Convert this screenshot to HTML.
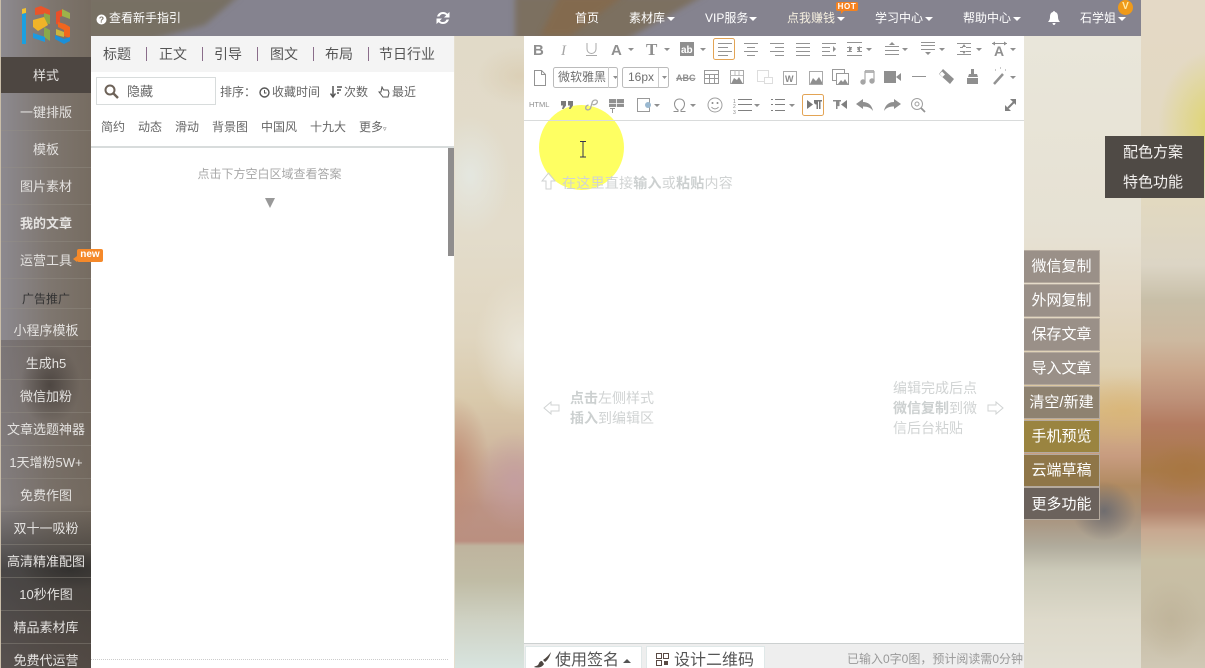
<!DOCTYPE html>
<html lang="zh"><head><meta charset="utf-8"><title>135编辑器</title>
<style>
*{box-sizing:border-box}
html,body{margin:0;padding:0;width:1205px;height:668px;overflow:hidden;background:#e5dfcf}
body{position:relative;font-family:"Liberation Sans","Noto Sans CJK SC",sans-serif;font-size:12px;color:#555}
.a{position:absolute;white-space:nowrap}
.c{text-align:center}
#bgm{left:455px;top:36px;width:69px;height:632px;background:
 radial-gradient(ellipse 40px 60px at 15px 140px,rgba(228,232,226,.9),transparent),
 radial-gradient(ellipse 45px 30px at 65px 40px,rgba(218,205,178,.8),transparent),
 radial-gradient(ellipse 45px 70px at 65px 310px,rgba(234,230,218,.95),transparent),
 radial-gradient(ellipse 40px 50px at 60px 445px,rgba(196,158,160,.95),transparent),
 radial-gradient(ellipse 35px 70px at 0 430px,rgba(190,135,110,.85),transparent),
 linear-gradient(180deg,#e1dac8 0,#e3dccb 200px,#e0d6c0 300px,#d9c9ab 365px,#d0b9a0 410px,#bc9384 470px,#ba8f80 505px,#bfb49e 510px,#c0bca5 545px,#cfd2c4 585px,#d8e4df 632px)}
#bgr{left:1024px;top:36px;width:117px;height:632px;background:
 radial-gradient(ellipse 32px 30px at 80px 475px,rgba(105,105,110,.9),transparent),
 radial-gradient(ellipse 55px 35px at 100px 375px,rgba(218,178,110,.55),transparent),
 linear-gradient(180deg,#e9e6da 0,#e6e1d3 200px,#e3d8c4 270px,#e0d2b4 330px,#d8bb88 375px,#c89c80 420px,#b08a60 450px,#a8927c 480px,#b0ab9c 510px,#cccab9 535px,#dedacb 585px,#e2dfd3 632px)}
#bgr3{left:1141px;top:0;width:64px;height:668px;background:
 radial-gradient(ellipse 55px 75px at 72px 125px,rgba(222,212,105,.95),transparent),
 radial-gradient(ellipse 40px 28px at 45px 470px,rgba(168,118,66,.9),transparent),
 radial-gradient(ellipse 32px 40px at 30px 620px,rgba(190,178,152,.75),transparent),
 linear-gradient(180deg,#e4d9c6 0,#e2d9c0 200px,#dcd5c5 265px,#c8bfa8 300px,#cdb9a0 340px,#c9a58a 370px,#bd9078 400px,#b37b60 425px,#a87a48 470px,#b08068 510px,#c8a890 530px,#c8bfa4 560px,#c6bca4 620px,#d0c8b5 668px)}
#side{left:0;top:0;width:91px;height:668px;background:
 radial-gradient(ellipse 30px 40px at 50px 385px,rgba(50,45,42,.75),transparent),
 radial-gradient(ellipse 50px 20px at 70px 570px,rgba(40,40,40,.8),transparent),
 linear-gradient(90deg,#8d8a90 0,#7e766f 55%,#766c61 100%)}
#side2{left:0;top:340px;width:91px;height:328px;background:linear-gradient(180deg,rgba(90,80,75,.35),rgba(110,100,90,.3) 50%,rgba(50,48,46,.75) 70%,rgba(70,62,58,.75) 100%)}
#edge{left:0;top:0;width:1px;height:668px;background:#c9bda9}
.s{left:1px;width:90px;text-align:center;color:#e4e2e0;font-size:13px;line-height:18px}
.l{left:1px;width:90px;height:1px;background:rgba(150,145,135,.4)}
#hd{left:91px;top:0;width:1050px;height:36px;background:#85838f;overflow:hidden}
.n{top:10px;color:#fff;font-size:12px;line-height:17px}
.car{position:absolute;width:0;height:0;border-left:4px solid transparent;border-right:4px solid transparent;border-top:4px solid #fff;top:17px}
#pan{left:91px;top:36px;width:363px;height:632px;background:#fff}
.t{top:45px;font-size:14px;color:#555;line-height:18px}
.sp{top:47px;width:1px;height:14px;background:#8a6d8a}
.f{top:119px;font-size:12px;color:#666;line-height:16px}
.r{top:84px;font-size:12px;color:#666;line-height:17px}
#ed{left:524px;top:36px;width:500px;height:632px;background:#fff}
.h{color:#d0d3d3;font-size:14px;line-height:20px}
.h b{font-weight:bold;color:#ccd0d0}
.b{left:1024px;width:76px;height:33px;color:#fff;font-size:15px;line-height:32px;text-align:center;border:1px solid #b5aa9e;border-left:0;background:#9a9088}
.m{left:1123px;color:#f2f0ee;font-size:15px;line-height:20px}
</style></head><body>
<div class="a" id="bgm"></div>
<div class="a" id="bgr"></div>
<div class="a" id="bgr3"></div>

<div class="a" id="side"></div>
<div class="a" id="side2"></div>
<div class="a" id="edge"></div>

<svg class="a" style="left:15px;top:4px" width="62" height="44" viewBox="15 4 62 44">
<path d="M22 9l4-1v5l-4 1z" fill="#f2c230"/><path d="M22 14l4-1v31l-4 0z" fill="#1aa0e0"/>
<path d="M35 8l6-2 9 4v6l-6-2-9 1z" fill="#e9552a"/><path d="M44 13l6 2v9l-6-1z" fill="#8fa845"/>
<path d="M33 20l11-3 4 8-10 6-5-4z" fill="#f0b428"/><path d="M44 27l6 3v11l-6-4z" fill="#8aa84a"/>
<path d="M33 33l12 4v5l-12-4z" fill="#1b9ae0"/>
<path d="M56 12l7-3v7l-3 1v8l-4-1z" fill="#e8502a"/><path d="M62 9l8 4v6l-8-3z" fill="#9db24a"/>
<path d="M58 22l7 2 5 3v11l-6-2v-6l-6-3z" fill="#f0661e"/><path d="M56 29l8 3v5l-8-2z" fill="#c9b540"/>
<path d="M55 35l9 4 6-2v4l-6 3-9-5z" fill="#1b8fd8"/>
</svg>

<div class="a" style="left:1px;top:57px;width:90px;height:36px;background:#4d4641"></div>
<div class="a s" style="top:67px">样式</div>
<div class="a l" style="top:130px"></div><div class="a l" style="top:167px"></div><div class="a l" style="top:204px"></div><div class="a l" style="top:241px"></div><div class="a l" style="top:278px"></div><div class="a l" style="top:308px"></div><div class="a l" style="top:346px"></div><div class="a l" style="top:379px"></div><div class="a l" style="top:412px"></div><div class="a l" style="top:445px"></div><div class="a l" style="top:478px"></div><div class="a l" style="top:511px"></div><div class="a l" style="top:544px"></div><div class="a l" style="top:577px"></div><div class="a l" style="top:610px"></div><div class="a l" style="top:643px"></div>
<div class="a s" style="top:104px">一键排版</div>
<div class="a s" style="top:141px">模板</div>
<div class="a s" style="top:178px">图片素材</div>
<div class="a s" style="top:215px;font-weight:bold">我的文章</div>
<div class="a s" style="top:252px">运营工具</div>
<div class="a s" style="top:290px;font-size:12px;color:#333">广告推广</div>
<div class="a s" style="top:322px">小程序模板</div>
<div class="a s" style="top:355px">生成h5</div>
<div class="a s" style="top:388px">微信加粉</div>
<div class="a s" style="top:421px">文章选题神器</div>
<div class="a s" style="top:454px">1天增粉5W+</div>
<div class="a s" style="top:487px">免费作图</div>
<div class="a s" style="top:520px">双十一吸粉</div>
<div class="a s" style="top:553px">高清精准配图</div>
<div class="a s" style="top:586px">10秒作图</div>
<div class="a s" style="top:619px">精品素材库</div>
<div class="a s" style="top:652px">免费代运营</div>

<div class="a" id="hd">
<svg class="a" style="left:0;top:0" width="1050" height="36" viewBox="91 0 1050 36">
<defs><filter id="bl"><feGaussianBlur stdDeviation="3"/></filter></defs>
<path d="M85 -5H240L205 25 150 40H85z" fill="#776f64" filter="url(#bl)"/>
<path d="M515 -5H705L625 40H515z" fill="#7c6f60" filter="url(#bl)"/>
<path d="M560 -5H625L570 36H540z" fill="#86694a" opacity=".75" filter="url(#bl)"/>
</svg>
</div>
<svg class="a" style="left:96px;top:14px" width="11" height="11" viewBox="0 0 11 11"><circle cx="5.500" cy="5.500" r="5" fill="#fff"/><text x="5.500" y="8.600" font-size="8.500" font-weight="bold" text-anchor="middle" fill="#7a7468" font-family="Liberation Sans">?</text></svg>
<div class="a n" style="left:109px">查看新手指引</div>
<svg class="a" style="left:435px;top:10px" width="16" height="16" viewBox="0 0 16 16"><path d="M2 6.500C3 3.500 5.300 2 8 2c2 0 3.300.8 4.400 1.900L14.500 2v5.500H9l2.200-2.200C10.500 4.500 9.400 4 8 4 6.300 4 5 5 4.500 6.500z" fill="#fff"/><path d="M14 9.500C13 12.500 10.700 14 8 14c-2 0-3.300-.8-4.400-1.900L1.500 14V8.500H7L4.800 10.700C5.500 11.500 6.600 12 8 12c1.700 0 3-1 3.500-2.500z" fill="#fff"/></svg>
<div class="a n" style="left:575px">首页</div>
<div class="a n" style="left:629px">素材库</div><div class="car" style="left:667px"></div>
<div class="a n" style="left:705px">VIP服务</div><div class="car" style="left:749px"></div>
<div class="a n" style="left:787px;color:#f6f0e0">点我赚钱</div><div class="car" style="left:837px"></div>
<div class="a" style="left:836px;top:2px;width:22px;height:9px;background:#f5821f;border-radius:2px;color:#fff;font-size:8px;line-height:9px;text-align:center;font-weight:bold;letter-spacing:.6px">HOT</div>
<div class="a" style="left:841px;top:11px;border-top:3px solid #f5821f;border-right:3px solid transparent"></div>
<div class="a n" style="left:875px">学习中心</div><div class="car" style="left:925px"></div>
<div class="a n" style="left:963px">帮助中心</div><div class="car" style="left:1013px"></div>
<svg class="a" style="left:1048px;top:11px" width="12" height="14" viewBox="0 0 12 14"><path d="M6 0C6.600 0 7 .5 7 1 9.300 1.500 10 3.500 10 6c0 2.500 1 3.800 2 5H0c1-1.200 2-2.500 2-5 0-2.500.7-4.500 3-5 0-.5.4-1 1-1zM4.500 12h3C7.500 13 6.800 14 6 14S4.500 13 4.500 12z" fill="#fff"/></svg>
<div class="a n" style="left:1080px">石学姐</div><div class="car" style="left:1118px"></div>
<div class="a" style="left:1118px;top:0;width:15px;height:15px;border-radius:50%;background:#ef9a1a;color:#ffe9a8;font-size:10px;line-height:14px;text-align:center;font-weight:bold">V</div>

<div class="a" id="pan"></div>
<div class="a" style="left:91px;top:36px;width:363px;height:36px;background:#f4f4f4"></div>
<div class="a t" style="left:103px">标题</div><div class="a sp" style="left:146px"></div>
<div class="a t" style="left:159px">正文</div><div class="a sp" style="left:202px"></div>
<div class="a t" style="left:214px">引导</div><div class="a sp" style="left:257px"></div>
<div class="a t" style="left:270px">图文</div><div class="a sp" style="left:313px"></div>
<div class="a t" style="left:325px">布局</div><div class="a sp" style="left:368px"></div>
<div class="a t" style="left:379px">节日行业</div>
<div class="a" style="left:96px;top:77px;width:120px;height:28px;border:1px solid #d8dcdc"></div>
<svg class="a" style="left:104px;top:84px" width="15" height="15" viewBox="0 0 15 15"><circle cx="6" cy="6" r="4.500" fill="none" stroke="#6d6258" stroke-width="2"/><path d="M9.500 9.500L14 14" stroke="#6d6258" stroke-width="2.400"/></svg>
<div class="a" style="left:127px;top:83px;font-size:13px;line-height:18px;color:#666">隐藏</div>
<div class="a r" style="left:220px">排序：</div>
<svg class="a" style="left:259px;top:87px" width="11" height="11" viewBox="0 0 11 11"><circle cx="5.500" cy="5.500" r="4.500" fill="none" stroke="#555" stroke-width="1.400"/><path d="M5.500 3v3h2" fill="none" stroke="#555"/></svg>
<div class="a r" style="left:272px">收藏时间</div>
<svg class="a" style="left:330px;top:85px" width="13" height="14" viewBox="0 0 13 14"><path d="M3 1v10M.5 8.500L3 12l2.500-3.500" fill="none" stroke="#555" stroke-width="1.500"/><path d="M7 2h5M7 5h4M7 8h2" stroke="#555" stroke-width="1.500"/></svg>
<div class="a r" style="left:344px">次数</div>
<svg class="a" style="left:378px;top:86px" width="12" height="13" viewBox="0 0 12 13"><path d="M4 1l1.500 3H10l1 3-1 4H5L1 6l2 0z" fill="none" stroke="#555"/></svg>
<div class="a r" style="left:392px">最近</div>
<div class="a f" style="left:101px">简约</div><div class="a f" style="left:138px">动态</div><div class="a f" style="left:175px">滑动</div><div class="a f" style="left:212px">背景图</div><div class="a f" style="left:261px">中国风</div><div class="a f" style="left:310px">十九大</div><div class="a f" style="left:359px">更多<span style="font-size:7px">▿</span></div>
<div class="a" style="left:91px;top:146px;width:363px;height:2px;background:#d8dcdc"></div>
<div class="a" style="left:448px;top:148px;width:6px;height:108px;background:#8f8d8d"></div>
<div class="a c" style="left:91px;top:166px;width:357px;font-size:12px;color:#a8a8a8;line-height:17px">点击下方空白区域查看答案</div>
<div class="a" style="left:265px;top:198px;border-left:5px solid transparent;border-right:5px solid transparent;border-top:10px solid #999"></div>
<div class="a" style="left:91px;top:659px;width:357px;border-top:1px dotted #ccc"></div>

<div class="a" style="left:77px;top:249px;width:26px;height:13px;background:#f5892a;border-radius:2px;color:#fff;font-size:10px;line-height:12px;text-align:center;font-weight:bold">new</div>
<div class="a" style="left:73px;top:256px;border-right:4px solid #f5892a;border-top:3px solid transparent;border-bottom:3px solid transparent"></div>

<div class="a" id="ed"></div>
<div class="a" style="left:539px;top:105px;width:85px;height:85px;border-radius:50%;background:radial-gradient(circle,#feff62 0,#feff62 92%,rgba(254,255,120,.5) 97%,rgba(255,255,255,0) 100%)"></div>
<svg class="a" style="left:524px;top:36px" width="500" height="85" viewBox="524 36 500 85" fill="none" stroke="#939393">
<g stroke="none" fill="#8f8f8f" font-family="Liberation Sans">
<text x="533" y="55" font-size="15" font-weight="bold">B</text>
<text x="561" y="55" font-size="15" font-family="Liberation Serif" font-style="italic" fill="#a5a5a5">I</text>
<text x="611" y="55" font-size="15" font-weight="bold">A</text>
<text x="646" y="55" font-size="17" font-weight="bold" font-family="Liberation Serif">T</text>
<rect x="680" y="42" width="14" height="14"/><text x="681" y="53" font-size="10" font-weight="bold" fill="#fff">ab</text>
<text x="676" y="81" font-size="9" font-weight="bold" text-decoration="line-through">ABC</text>
<text x="529" y="107" font-size="7.500">HTML</text>
<text x="994" y="56" font-size="14" font-weight="bold">A</text>
</g>
<path d="M587 43v6a4.500 4.500 0 0 0 9 0v-6M586 55.500h11" stroke="#aaa"/>
<rect x="713.500" y="38.500" width="21" height="21" rx="2" stroke="#e3a455"/>
<rect x="802.500" y="94.500" width="21" height="21" rx="2" stroke="#e3a455"/>
<path d="M718 43.500h14M718 47.500h10M718 51.500h14M718 55.500h10" stroke-width="1"/>
<path d="M744 43.500h14M747 47.500h8M744 51.500h14M747 55.500h8M770 43.500h14M775 47.500h9M770 51.500h14M775 55.500h9M796 43.500h14M796 47.500h14M796 51.500h14M796 55.500h14M822 43.500h14M822 47.500h8M822 51.500h8M822 55.500h14M847 42.500h15M847 47.500h5M857 47.500h5M847 51.500h5M857 51.500h5M847 55.500h15"/>
<path d="M885 46.500h14M885 50.500h14M885 54.500h14M921 42.500h14M921 45.500h14M921 49.500h14M957 43.500h14M957 54.500h14M960 47.500h3M966 47.500h5M960 51.500h3M966 51.500h5M992 43.500h15"/>
<g stroke="none" fill="#8f8f8f"><path d="M892 42l3 3h-6zM928 55l-3-3h6zM833 46l3 3-3 3zM849 46l3 3-3 3zM860 46l-3 3 3 3zM962 47l2-3 2 3zM962 51l2 3 2-3zM992 43.500l3-2v4zM1007 43.500l-3-2v4z"/>
<path d="M628 48h6l-3 3zM664 48h6l-3 3zM700 48h6l-3 3zM866 48h6l-3 3zM902 48h6l-3 3zM939 48h6l-3 3zM976 48h6l-3 3zM1010 48h6l-3 3zM690 104h6l-3 3zM654 104h6l-3 3zM754 104h6l-3 3zM789 104h6l-3 3zM1010 76h6l-3 3zM613 76h5l-2.500 3zM662 76h5l-2.500 3z"/></g>
<path d="M534.500 70.500h7l4 4v11h-11zM541.500 70.500v4h4"/>
<rect x="553.500" y="67.500" width="64" height="20" rx="2" stroke="#bbb"/><path d="M608.500 67v21M658.500 67v21" stroke="#ccc"/>
<rect x="622.500" y="67.500" width="46" height="20" rx="2" stroke="#bbb"/>
<rect x="704.500" y="70.500" width="14" height="13" stroke="#999"/><path d="M704 74.500h15M704 78.500h15M709.500 74v9M714.500 74v9" stroke="#999"/>
<rect x="730.500" y="70.500" width="13" height="13" stroke="#aaa"/>
<path d="M730 75.500h13M735 70v5M739 70v5" stroke="#bbb"/>
<g fill="#8f8f8f" stroke="none"><path d="M731 84l3-6 3 2 2-3 4 7zM810 84l3-6 3 3 3-4 4 7z"/></g>
<rect x="757.500" y="70.500" width="11" height="11" stroke="#ddd"/><rect x="764.500" y="77.500" width="8" height="6" stroke="#ddd" fill="#fff"/>
<rect x="783.500" y="71.500" width="13" height="13" stroke="#aaa"/>
<text x="785" y="82" font-size="9" font-weight="bold" fill="#888" stroke="none" font-family="Liberation Sans">W</text>
<rect x="809.500" y="71.500" width="13" height="13" stroke="#aaa"/>
<rect x="832.500" y="69.500" width="12" height="11" stroke="#999"/><rect x="836.500" y="73.500" width="12" height="11" stroke="#999" fill="#fff"/><path d="M838 84l3-4 2 2 2-3 3 5z" fill="#8f8f8f" stroke="none"/>
<path d="M865 71.500h9" stroke-width="3" stroke="#b5b5b5"/><path d="M865 71v11M874 71v10" stroke-width="1.200" stroke="#aaa"/><circle cx="863" cy="82" r="2.700" fill="#a5a5a5" stroke="none"/><circle cx="872" cy="81" r="2.700" fill="#a5a5a5" stroke="none"/>
<g fill="#8f8f8f" stroke="none"><rect x="884" y="71" width="12" height="12"/><path d="M896 77l5-4v8z"/></g>
<path d="M912 76.500h14"/>
<path d="M943 69l11 10-4 5-11-10z" fill="#8f8f8f" stroke="none"/><path d="M942 71.500l3 3-2.500 2.500-3-3z" fill="#fff" stroke="none"/>
<path d="M971 69h3v5h3l1 3h-10l1-3h2zM967 78h11v6h-11z" fill="#8f8f8f" stroke="none"/>
<path d="M994 84l9-10" stroke-width="2.500"/><path d="M995 70h1M1005 70h1M1000 68h1"/>
<path d="M561 101h5v4.500l-2.500 3.500h-1.500l1-3.500h-2zM568 101h5v4.500l-2.500 3.500h-1.500l1-3.500h-2z" fill="#7a7a7a" stroke="none"/>
<path d="M586.500 109.500c2 1 4 0 4.500-3l1-3.500c.5-2.500 2-3 3.500-3s2.500 1.500 1.500 3-3 2-4.500 1.500M586.500 109.500c-1.500-1-1-4 2-4.500" stroke="#aaa" stroke-width="1.300"/>
<rect x="609.500" y="99.500" width="14" height="7" fill="#8f8f8f"/><path d="M616.500 99v8M609 103.500h15" stroke="#fff" stroke-width=".8"/><path d="M610 108.500h5M612.500 108.500v4.500"/>
<rect x="637.500" y="98.500" width="12" height="13" stroke="#999"/><circle cx="648" cy="105" r="3" fill="#9ab8d0" stroke="none"/>
<path d="M673.500 111.500h4.500v-1.500c-2-1-3.500-3.500-3.500-6 0-3 2-5 5-5s5 2 5 5c0 2.500-1.500 5-3.500 6v1.500h4.500" stroke="#8f8f8f"/>
<circle cx="715" cy="105" r="7" stroke="#a0a0a0"/><circle cx="712.500" cy="103" r="1" fill="#888" stroke="none"/><circle cx="717.500" cy="103" r="1" fill="#888" stroke="none"/><path d="M711.500 107c2 2.500 5 2.500 7 0"/>
<path d="M738 99.500h14M738 104.500h14M738 110.500h14M771 99.500h2M771 104.500h2M771 110.500h2M775 99.500h10M775 104.500h10M775 110.500h10" stroke="#808080"/>
<text x="733" y="103" font-size="5" fill="#888" stroke="none">1</text><text x="733" y="108" font-size="5" fill="#888" stroke="none">2</text><text x="733" y="114" font-size="5" fill="#888" stroke="none">3</text>
<path d="M807 100l6 4.500-6 4.500z" fill="#777" stroke="none"/>
<path d="M814 100h8v1.500h-1.500v7.500h-1.500v-7.500h-1v7.500h-1.500v-4.500a2.300 2.300 0 0 1-2.500-2.300z" fill="#777" stroke="none"/>
<path d="M833 100h8v1.500h-1.500v4.500a2.500 2.500 0 0 1-2 0v3h-1.500v-7.500h-1v7.500H835v-7.500h-2z" fill="#8a8a8a" stroke="none"/>
<path d="M847 100l-6 4.500 6 4.500z" fill="#808080" stroke="none"/>
<path d="M856 104l7-5v3c5 0 9 3 10 9-2-3-5-4.500-10-4.500v2.500z" fill="#8f8f8f" stroke="none"/>
<path d="M901 104l-7-5v3c-5 0-9 3-10 9 2-3 5-4.500 10-4.500v2.500z" fill="#8f8f8f" stroke="none"/>
<circle cx="917" cy="104" r="5.500" stroke="#a0a0a0"/><circle cx="917" cy="104" r="2" stroke="#a0a0a0"/><path d="M921 108l4 4" stroke-width="1.800"/>
<path d="M1008 108l6-6" stroke="#808080" stroke-width="2"/><path d="M1010 99h6v6zM1005 105v6h6z" fill="#808080" stroke="none"/>
<path d="M524 120.500h500" stroke="#d9dbdb"/>
</svg>
<div class="a" style="left:558px;top:69px;font-size:12px;color:#6f6f6f;line-height:16px">微软雅黑</div>
<div class="a" style="left:628px;top:69px;font-size:12px;color:#6f6f6f;line-height:16px">16px</div>

<svg class="a" style="left:578px;top:141px" width="10" height="17" viewBox="0 0 10 17"><path d="M2 .5h6M2 16h6M5 .5V16" fill="none" stroke="#33334f"/></svg>

<svg class="a" style="left:541px;top:172px" width="15" height="18" viewBox="0 0 15 18"><path d="M7.500 1L14 9h-4v8H5V9H1z" fill="none" stroke="#cfd2d2"/></svg>
<div class="a h" style="left:562px;top:173px;letter-spacing:.25px">在这里直接<b>输入</b>或<b>粘贴</b>内容</div>
<svg class="a" style="left:543px;top:401px" width="17" height="14" viewBox="0 0 17 14"><path d="M1 7l7-6v3h8v6H8v3z" fill="none" stroke="#d0d3d3"/></svg>
<div class="a h" style="left:570px;top:388px"><b>点击</b>左侧样式</div>
<div class="a h" style="left:570px;top:408px"><b>插入</b>到编辑区</div>
<div class="a h" style="left:893px;top:378px">编辑完成后点</div>
<div class="a h" style="left:893px;top:398px"><b>微信复制</b>到微</div>
<div class="a h" style="left:893px;top:418px">信后台粘贴</div>
<svg class="a" style="left:987px;top:401px" width="17" height="14" viewBox="0 0 17 14"><path d="M16 7L9 1v3H1v6h8v3z" fill="none" stroke="#d0d3d3"/></svg>

<div class="a" style="left:524px;top:643px;width:500px;height:25px;background:#eeeeee;border-top:1px solid #ccd0d0"></div>
<div class="a" style="left:525px;top:646px;width:117px;height:22px;background:#fff;border:1px solid #e0e8e8;border-bottom:0"></div>
<svg class="a" style="left:534px;top:652px" width="18" height="16" viewBox="0 0 18 16"><path d="M17 0c-2 3-5 6-8 8l2 2c3-2 5-6 6-10zM8 9c-3 0-3 3-4 4-1 1-3 1-4 2 3 1 8 1 10-3z" fill="#4d4641"/></svg>
<div class="a" style="left:555px;top:650px;font-size:16px;color:#555;line-height:21px">使用签名</div>
<div class="a" style="left:623px;top:659px;border-left:4px solid transparent;border-right:4px solid transparent;border-bottom:4px solid #555"></div>
<div class="a" style="left:646px;top:646px;width:119px;height:22px;background:#fff;border:1px solid #e0e8e8;border-bottom:0"></div>
<svg class="a" style="left:656px;top:653px" width="13" height="13" viewBox="0 0 13 13"><path d="M.5.500h5v5h-5zM7.500.500h5v5h-5zM.5 7.500h5v5h-5z" fill="none" stroke="#5a4a44"/><path d="M8 8h4v4H8z" fill="#5a4a44"/></svg>
<div class="a" style="left:674px;top:650px;font-size:16px;color:#555;line-height:21px">设计二维码</div>
<div class="a" style="left:847px;top:651px;width:177px;font-size:12px;color:#999;line-height:17px;overflow:hidden">已输入0字0图，预计阅读需0分钟</div>

<div class="a b" style="top:250px">微信复制</div>
<div class="a b" style="top:284px">外网复制</div>
<div class="a b" style="top:318px">保存文章</div>
<div class="a b" style="top:352px">导入文章</div>
<div class="a b" style="top:386px;background:#8e8270">清空/新建</div>
<div class="a b" style="top:420px;background:#9a8440">手机预览</div>
<div class="a b" style="top:454px;background:#8f7648">云端草稿</div>
<div class="a b" style="top:487px;background:#6b625c;line-height:34px">更多功能</div>

<div class="a" style="left:1105px;top:136px;width:99px;height:62px;background:#4f4a45"></div>
<div class="a m" style="top:143px">配色方案</div>
<div class="a m" style="top:173px">特色功能</div>
</body></html>
